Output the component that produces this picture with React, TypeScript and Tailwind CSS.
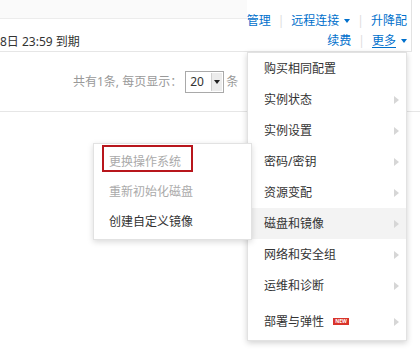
const font = { fontFamily: '"Noto Sans", "Noto Sans CJK SC", sans-serif' }

function Caret({ color }: { color: string }) {
  return (
    <span
      className="inline-block w-0 h-0 border-x-[3.5px] border-x-transparent border-t-[4px] align-middle"
      style={{ borderTopColor: color }}
    />
  )
}

function RightArrow() {
  return <span className="w-0 h-0 border-y-[4px] border-y-transparent border-l-[5px] border-l-[#d6d6d6]" />
}

const menu = [
  { label: '购买相同配置', arrow: false },
  { label: '实例状态', arrow: true },
  { label: '实例设置', arrow: true },
  { label: '密码/密钥', arrow: true },
  { label: '资源变配', arrow: true },
  { label: '磁盘和镜像', arrow: true, active: true },
  { label: '网络和安全组', arrow: true },
  { label: '运维和诊断', arrow: true },
]

export default function App() {
  return (
    <div className="relative w-[420px] h-[361px] overflow-hidden bg-white text-[12px] text-[#333]" style={font}>
      {/* table head row */}
      <div className="flex w-[412px] h-[52px] border-b border-[#e6e6e6]">
        <div className="flex-1 flex flex-col">
          <div className="h-[19px] bg-[#fafafa] border-b border-[#ececec]" />
          <div className="pt-[14px] leading-[18px] text-[#333]">8日 23:59 到期</div>
        </div>
        <div className="flex flex-col items-end pr-[4px] pt-[11px] border-r border-[#e3e3e3] text-[#0070cc]">
          <div className="flex items-center h-[20px]">
            <span>管理</span>
            <span className="mx-[7px] text-[#dddddd]">|</span>
            <span>远程连接</span>
            <span className="ml-[5px]"><Caret color="#0070cc" /></span>
            <span className="mx-[7px] text-[#dddddd]">|</span>
            <span>升降配</span>
          </div>
          <div className="flex items-center h-[22px]">
            <span>续费</span>
            <span className="mx-[7px] text-[#dddddd]">|</span>
            <span className="underline underline-offset-2">更多</span>
            <span className="ml-[5px]"><Caret color="#0070cc" /></span>
          </div>
        </div>
      </div>

      {/* pagination */}
      <div className="flex items-center h-[60px] pl-[73px] border-b border-[#e6e6e6]">
        <span className="text-[#999]">共有1条, 每页显示：</span>
        <div className="flex items-center ml-[3px] w-[39px] h-[22px] border border-[#a9a9a9] bg-white">
          <span className="flex-1 pl-[4px] text-[#333]">20</span>
          <span className="flex items-center justify-center w-[11px] h-[18px] mr-[1px] bg-[#ececec] border-l border-[#d0d0d0]">
            <Caret color="#222" />
          </span>
        </div>
        <span className="ml-[2px] text-[#999]">条</span>
      </div>

      {/* dropdown menu */}
      <div className="absolute left-[247px] top-[52px] w-[160px] pb-[3px] bg-white border border-[#e2e2e2] shadow-[0_2px_6px_rgba(0,0,0,0.18)]">
        {menu.map((m) => (
          <div
            key={m.label}
            className={`flex items-center justify-between h-[31px] pl-[16px] pr-[7px] ${m.active ? 'bg-[#f3f3f3]' : ''}`}
          >
            <span>{m.label}</span>
            {m.arrow && <RightArrow />}
          </div>
        ))}
        <div className="flex items-center justify-between h-[31px] mt-[5px] pl-[16px] pr-[7px]">
          <span className="flex items-center">
            部署与弹性
            <span className="ml-[9px] flex items-center justify-center w-[16px] h-[7px] bg-[#d9342b] text-white text-[5px] leading-none font-bold">
              NEW
            </span>
          </span>
          <RightArrow />
        </div>
      </div>

      {/* submenu */}
      <div className="absolute left-[93px] top-[143px] w-[159px] pt-[3px] pb-[2px] bg-white border border-[#e2e2e2] shadow-[0_2px_6px_rgba(0,0,0,0.15)]">
        <div className="relative flex items-center h-[30px] pl-[15px] text-[#aaaaaa]">
          更换操作系统
          <span className="absolute left-[8px] top-[-2px] w-[91px] h-[27px] border-2 border-[#b8161c]" />
        </div>
        <div className="flex items-center h-[30px] pl-[15px] text-[#aaaaaa]">重新初始化磁盘</div>
        <div className="flex items-center h-[30px] pl-[15px] text-[#333]">创建自定义镜像</div>
      </div>
    </div>
  )
}
